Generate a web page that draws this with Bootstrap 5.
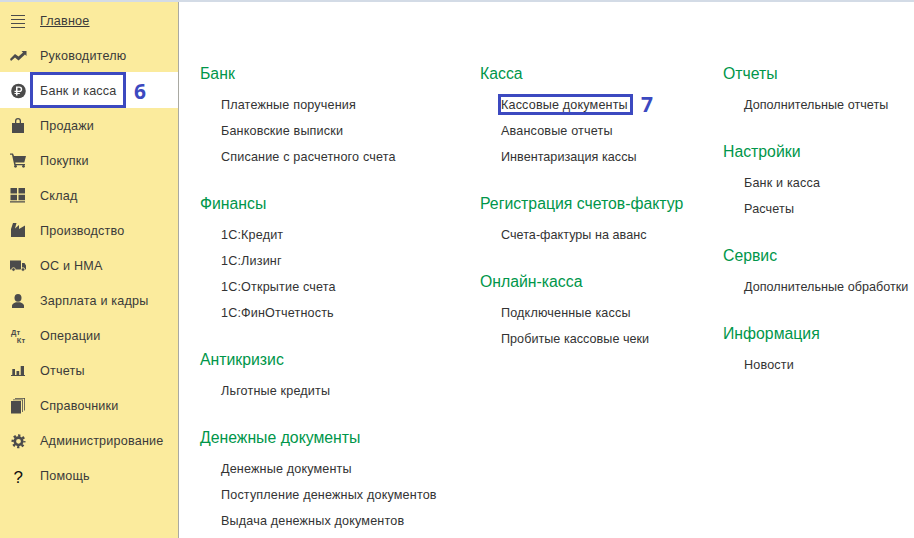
<!DOCTYPE html>
<html lang="ru">
<head>
<meta charset="utf-8">
<title>Банк и касса</title>
<link href="https://cdn.jsdelivr.net/npm/bootstrap@5.3.0/dist/css/bootstrap.min.css" rel="stylesheet">
<style>
html,body{height:100%;overflow:hidden;}
body{font-family:"Liberation Sans",Arial,sans-serif;font-size:13px;color:#333;background:#fff;}
.shell{height:538px;border-top:2px solid #d3dbe6;}
.side{width:179px;flex:none;background:#fbeb9d;border-right:1px solid #a9a9a2;padding-top:2px;}
.side-row{height:35px;padding-left:6px;color:#3a3a3a;font-size:12.6px;letter-spacing:.2px;text-decoration:none;}
.side-row.on{background:#fff;position:relative;height:36px;padding-top:3px;margin-top:-2px;margin-bottom:1px;}
.side-row.cur{text-decoration:underline;}
.ico{width:24px;height:18px;margin-right:10px;flex:none;fill:#4b4b4b;}
.hl{position:absolute;border:3px solid #3c49c0;pointer-events:none;}
.hl-a{left:30px;top:0;width:96px;height:36px;}
.hl-num{position:absolute;color:#3c49c0;font-family:"Open Sans",sans-serif;font-weight:700;font-size:21px;line-height:1;}
.num-a{left:134px;top:9px;}
.main{padding:59px 0 0 21px;}
.col-a{width:280px;flex:none;}
.col-b{width:243px;flex:none;}
.col-c{flex:none;}
.grp{margin-bottom:21px;}
.grp-title{font-size:15.8px;font-weight:400;color:#00964a;line-height:26px;margin:0 0 5px;white-space:nowrap;}
.grp-list{list-style:none;margin:0;padding:0 0 0 21px;}
.grp-list li{height:26px;line-height:26px;white-space:nowrap;position:relative;font-size:12.6px;letter-spacing:.16px;}
.grp-list li.tight{letter-spacing:.03px;}
.hl-b{left:-3px;top:2px;width:135px;height:21px;}
.num-b{left:140px;top:2px;}
</style>
</head>
<body>
<div class="shell d-flex">
  <nav class="side d-flex flex-column">
    <a class="side-row cur d-flex align-items-center" href="#">
      <svg class="ico" viewBox="0 0 24 18"><path d="M5 2h14v1H5zM5 6h14v1H5zM5 10h14v1H5zM5 14h14v1H5z"/></svg>Главное</a>
    <a class="side-row d-flex align-items-center" href="#">
      <svg class="ico" viewBox="0 0 24 18"><path d="M4 11l5-5 3.500 2.500L17 4.500 15.500 3h5v5L19 6.500l-6.500 6L9 9.500l-4 3.500z"/></svg>Руководителю</a>
    <a class="side-row on d-flex align-items-center" href="#">
      <svg class="ico" viewBox="0 0 24 18"><circle cx="12.500" cy="8" r="7.300"/><path fill="#fff" d="M10 12.500V3.500h3.400a2.800 2.800 0 0 1 0 5.600h-1.900v.9h2.300v1.100h-2.300v1.400zM11.500 4.800v3h1.800a1.500 1.500 0 0 0 0-3zM8.500 7.800H10v1.300H8.500zM8.500 10H10v1.100H8.500z"/></svg>Банк и касса
      <span class="hl hl-a"></span><span class="hl-num num-a">6</span></a>
    <a class="side-row d-flex align-items-center" href="#">
      <svg class="ico" viewBox="0 0 24 18"><path fill-rule="evenodd" d="M6 5h3V3a3 3 0 0 1 6 0v2h3v10H6zM10.300 5h3.400V3a1.700 1.700 0 0 0-3.400 0z"/></svg>Продажи</a>
    <a class="side-row d-flex align-items-center" href="#">
      <svg class="ico" viewBox="0 0 24 18"><path d="M4 .5h3L8 3h12l-1.700 6.500H9.300l.3 1.500H19v1.300H8.300L6 1.800H4z"/><circle cx="9.500" cy="13.300" r="1.400"/><circle cx="17.500" cy="13.300" r="1.400"/></svg>Покупки</a>
    <a class="side-row d-flex align-items-center" href="#">
      <svg class="ico" viewBox="0 0 24 18"><path d="M4.500 0H11v5.500H4.500zM12.500 0H19v5.500h-6.500zM4.500 6.800H11v5.400H4.500zM12.500 6.800H19v5.400h-6.500zM4 13.300h15v1.200H4z"/></svg>Склад</a>
    <a class="side-row d-flex align-items-center" href="#">
      <svg class="ico" viewBox="0 0 24 18"><path d="M5 14V6L7 0h3.500L9 5.500l4-3.500v4l6-3.500V14z"/></svg>Производство</a>
    <a class="side-row d-flex align-items-center" href="#">
      <svg class="ico" viewBox="0 0 24 18"><path d="M4 2.500h11V11.500H4zM16 5h2.500L20 7.500v4h-4z"/><circle cx="7.500" cy="11.500" r="1.800" stroke="#fbeb9d" stroke-width=".8"/><circle cx="17" cy="11.500" r="1.800" stroke="#fbeb9d" stroke-width=".8"/></svg>ОС и НМА</a>
    <a class="side-row d-flex align-items-center" href="#">
      <svg class="ico" viewBox="0 0 24 18"><ellipse cx="12" cy="4.800" rx="3.500" ry="3.900"/><path d="M6 15v-2.500c0-1.800 2.500-2.500 4-3.300h4c1.500.8 4 1.500 4 3.300V15z"/></svg>Зарплата и кадры</a>
    <a class="side-row d-flex align-items-center" href="#">
      <svg class="ico" viewBox="0 0 24 18"><text x="5" y="6.800" font-size="7.500" font-weight="700" font-family="Liberation Sans,sans-serif">Дт</text><text x="10.700" y="15" font-size="7.500" font-weight="700" font-family="Liberation Sans,sans-serif">Кт</text></svg>Операции</a>
    <a class="side-row d-flex align-items-center" href="#">
      <svg class="ico" viewBox="0 0 24 18"><path d="M6.300 6H9v6H6.300zM10.500 8h2.700v4h-2.700zM14.700 3H18v9h-3.300zM5 12h14v1H5z"/></svg>Отчеты</a>
    <a class="side-row d-flex align-items-center" href="#">
      <svg class="ico" viewBox="0 0 24 18"><path d="M5 3h10v12.500H5zM17 1.500V14h-.8V2.300H7v-.8zM19 0v12.500h-.8V.8H9V0z"/></svg>Справочники</a>
    <a class="side-row d-flex align-items-center" href="#">
      <svg class="ico" viewBox="0 0 24 18"><circle cx="12.500" cy="8.300" r="3.700" fill="none" stroke="#4b4b4b" stroke-width="2.600"/><circle cx="12.500" cy="8.300" r="5.800" fill="none" stroke="#4b4b4b" stroke-width="2.400" stroke-dasharray="2.280 2.280" stroke-dashoffset="1.140"/></svg>Администрирование</a>
    <a class="side-row d-flex align-items-center" href="#">
      <svg class="ico" viewBox="0 0 24 18"><text x="12.300" y="14.500" text-anchor="middle" font-size="17" fill="#111" font-family="Liberation Sans,sans-serif">?</text></svg>Помощь</a>
  </nav>
  <main class="main d-flex">
    <div class="col-a">
      <section class="grp"><h2 class="grp-title">Банк</h2><ul class="grp-list"><li>Платежные поручения</li><li>Банковские выписки</li><li>Списание с расчетного счета</li></ul></section>
      <section class="grp"><h2 class="grp-title">Финансы</h2><ul class="grp-list"><li>1С:Кредит</li><li>1С:Лизинг</li><li>1С:Открытие счета</li><li>1С:ФинОтчетность</li></ul></section>
      <section class="grp"><h2 class="grp-title">Антикризис</h2><ul class="grp-list"><li>Льготные кредиты</li></ul></section>
      <section class="grp"><h2 class="grp-title">Денежные документы</h2><ul class="grp-list"><li>Денежные документы</li><li>Поступление денежных документов</li><li>Выдача денежных документов</li></ul></section>
    </div>
    <div class="col-b">
      <section class="grp"><h2 class="grp-title">Касса</h2><ul class="grp-list"><li>Кассовые документы<span class="hl hl-b"></span><span class="hl-num num-b">7</span></li><li>Авансовые отчеты</li><li class="tight">Инвентаризация кассы</li></ul></section>
      <section class="grp"><h2 class="grp-title">Регистрация счетов-фактур</h2><ul class="grp-list"><li class="tight">Счета-фактуры на аванс</li></ul></section>
      <section class="grp"><h2 class="grp-title">Онлайн-касса</h2><ul class="grp-list"><li>Подключенные кассы</li><li class="tight">Пробитые кассовые чеки</li></ul></section>
    </div>
    <div class="col-c">
      <section class="grp"><h2 class="grp-title">Отчеты</h2><ul class="grp-list"><li class="tight">Дополнительные отчеты</li></ul></section>
      <section class="grp"><h2 class="grp-title">Настройки</h2><ul class="grp-list"><li>Банк и касса</li><li>Расчеты</li></ul></section>
      <section class="grp"><h2 class="grp-title">Сервис</h2><ul class="grp-list"><li class="tight">Дополнительные обработки</li></ul></section>
      <section class="grp"><h2 class="grp-title">Информация</h2><ul class="grp-list"><li>Новости</li></ul></section>
    </div>
  </main>
</div>
<script src="https://cdn.jsdelivr.net/npm/bootstrap@5.3.0/dist/js/bootstrap.bundle.min.js"></script>
</body>
</html>
